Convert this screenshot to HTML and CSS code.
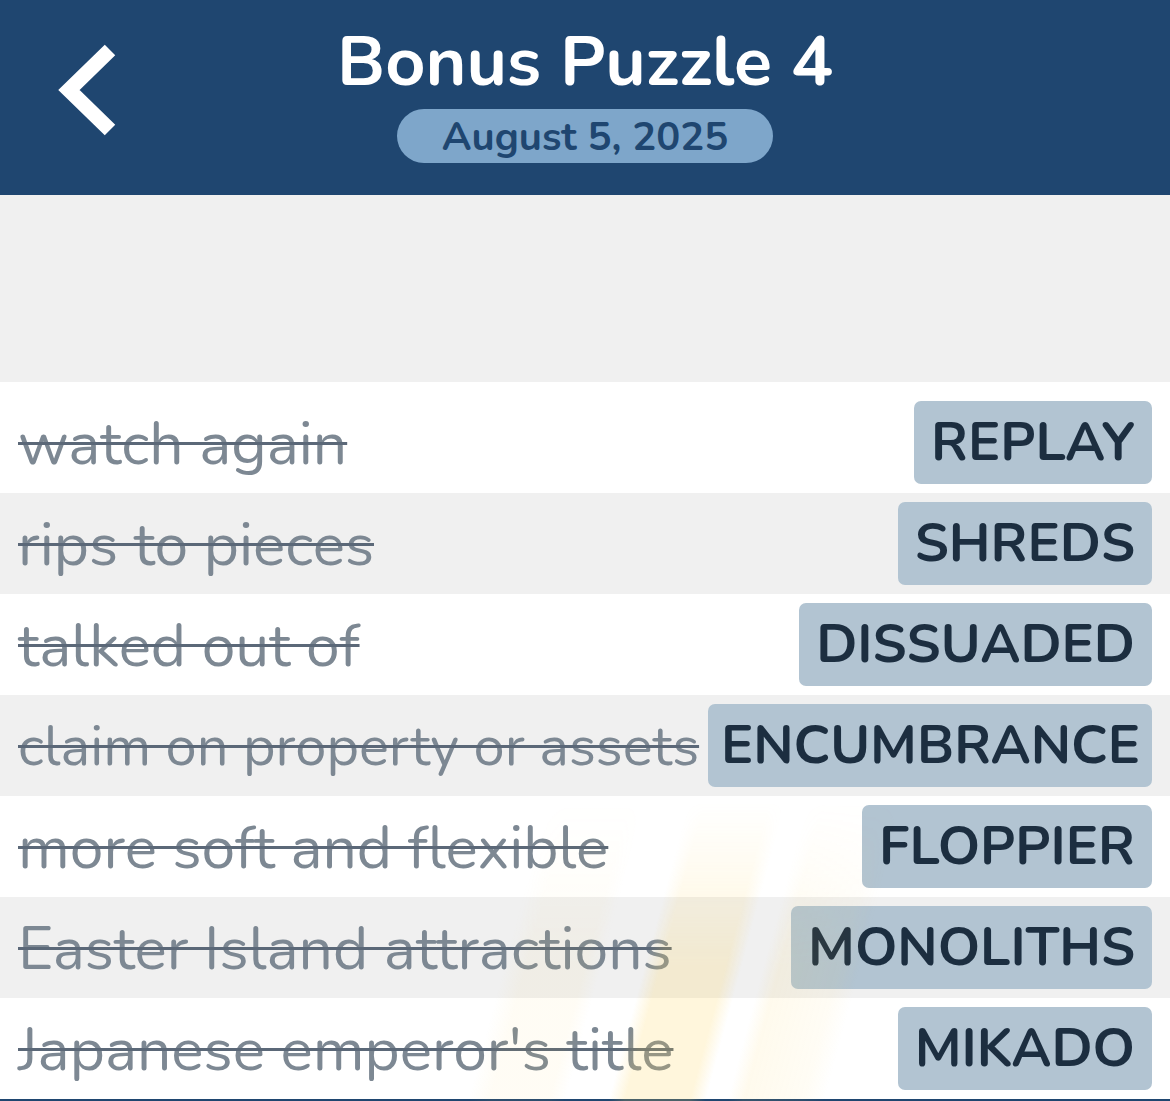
FILE: index.html
```html
<!DOCTYPE html>
<html lang="en">
<head>
    <meta charset="UTF-8">
    <meta name="viewport" content="width=device-width, initial-scale=1.0">
    <title>Bonus Puzzle 4</title>
    <link rel="stylesheet" href="styles.css">
</head>
<body>
    <header class="top-bar">
        <a class="back" href="#">
            <svg width="62" height="92" viewBox="0 0 62 92">
                <polyline points="53,6 12,46 53,86" fill="none" stroke="#fff" stroke-width="15" stroke-linejoin="miter"/>
            </svg>
        </a>
        <div class="heading">
            <h1>Bonus Puzzle 4</h1>
            <span class="date">August 5, 2025</span>
        </div>
    </header>

    <div class="spacer"></div>

    <div class="clues">
        <div class="glow"></div>
        <div class="row"><span class="clue">watch again</span><span class="answer">REPLAY</span></div>
        <div class="row alt"><span class="clue">rips to pieces</span><span class="answer">SHREDS</span></div>
        <div class="row"><span class="clue">talked out of</span><span class="answer">DISSUADED</span></div>
        <div class="row alt"><span class="clue small">claim on property or assets</span><span class="answer wide">ENCUMBRANCE</span></div>
        <div class="row"><span class="clue">more soft and flexible</span><span class="answer">FLOPPIER</span></div>
        <div class="row alt"><span class="clue">Easter Island attractions</span><span class="answer">MONOLITHS</span></div>
        <div class="row"><span class="clue">Japanese emperor's title</span><span class="answer">MIKADO</span></div>
    </div>
    <div class="bottom-line"></div>
</body>
</html>
```

FILE: styles.css
```css
body {
    margin: 0;
    padding: 0;
    font-family: "Nunito", "Lato", "Noto Sans", sans-serif;
    background-color: #fff;
    overflow: hidden;
}
.top-bar {
    height: 195px;
    background-color: #1f4670;
    display: flex;
    justify-content: center;
    position: relative;
}
.back {
    position: absolute;
    left: 57px;
    top: 44px;
}
.back svg {
    display: block;
}
.heading {
    display: flex;
    flex-direction: column;
    align-items: center;
    padding-top: 20px;
}
h1 {
    margin: 0;
    color: #fff;
    font-size: 70px;
    font-weight: 700;
    line-height: 84px;
}
.date {
    margin-top: 5px;
    width: 376px;
    height: 54px;
    line-height: 56px;
    text-align: center;
    border-radius: 27px;
    background-color: #7ea6ca;
    color: #1f4670;
    font-size: 40px;
    font-weight: 700;
}
.spacer {
    height: 187px;
    background-color: #f0f0f0;
}
.clues {
    position: relative;
    padding-top: 10px;
}
.row {
    height: 101px;
    display: flex;
    align-items: center;
    justify-content: space-between;
    padding: 0 18px;
    position: relative;
}
.row.alt {
    background-color: #f0f0f0;
}
.clue {
    color: #7d8893;
    font-size: 60.5px;
    text-decoration: line-through;
    text-decoration-color: #5b6878;
    text-decoration-thickness: 3px;
    white-space: nowrap;
    margin-top: 2px;
}
.clue.small {
    font-size: 56px;
}
.answer {
    flex-shrink: 0;
    margin-left: 8px;
    background-color: #b2c4d2;
    color: #1c2e40;
    font-size: 54px;
    font-weight: 700;
    height: 83px;
    line-height: 83px;
    padding: 0 17px;
    border-radius: 7px;
    white-space: nowrap;
}
.answer.wide {
    margin-left: 6px;
    padding: 0 12px 0 13px;
}
.glow {
    position: absolute;
    left: 440px;
    top: 420px;
    width: 460px;
    height: 300px;
    pointer-events: none;
    z-index: 1;
    background:
        linear-gradient(105deg, transparent 46%, rgba(255, 210, 80, 0.2) 49%, rgba(255, 210, 80, 0.2) 61%, transparent 64%),
        linear-gradient(105deg, transparent 68%, rgba(255, 210, 80, 0.1) 71%, rgba(255, 210, 80, 0.06) 82%, transparent 86%),
        linear-gradient(105deg, transparent 20%, rgba(255, 210, 80, 0.06) 24%, rgba(255, 210, 80, 0.06) 35%, transparent 38%);
    -webkit-mask-image: linear-gradient(to bottom, transparent, #000 55%);
    mask-image: linear-gradient(to bottom, transparent, #000 55%);
}
.bottom-line {
    height: 3px;
    background-color: #1f4670;
}
```
